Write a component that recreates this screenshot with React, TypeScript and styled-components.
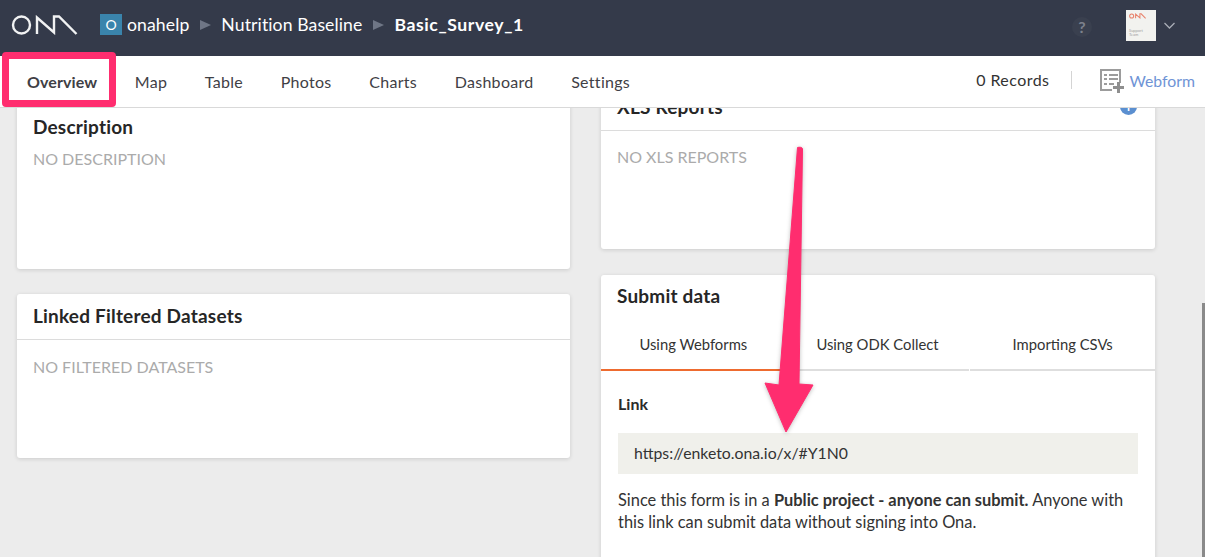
import React from "react";
import styled, { createGlobalStyle } from "styled-components";

const GlobalStyle = createGlobalStyle`
  html, body {
    margin: 0;
    height: 100%;
    overflow: hidden;
    background: #ececec;
    font-family: "Lato", "Liberation Sans", sans-serif;
    color: #2b2b2b;
  }
  * { box-sizing: border-box; }
`;

const Page = styled.div`
  position: relative;
  width: 1205px;
  height: 557px;
  overflow: hidden;
  display: flex;
  flex-direction: column;
`;

const TopBar = styled.header`
  height: 56px;
  flex: none;
  background: #343a4a;
  display: flex;
  align-items: center;
  padding: 0 30px 6px 11px;
  color: #fff;
`;

const Crumbs = styled.div`
  display: flex;
  align-items: center;
  margin-left: 22px;
  margin-bottom: 2px;
  font-size: 17.6px;
`;

const OrgBadge = styled.span`
  width: 22px;
  height: 21px;
  background: #3a84ac;
  font-size: 14px;
  display: flex;
  align-items: center;
  justify-content: center;
  margin-right: 5px;
`;

const Crumb = styled.span<{ $current?: boolean }>`
  font-weight: ${(p) => (p.$current ? 700 : 400)};
  letter-spacing: ${(p) => (p.$current ? "0.6px" : "0.1px")};
`;

const CrumbArrow = styled.span`
  width: 0;
  height: 0;
  margin: 1px 10px 0 11px;
  border-left: 11px solid #6f7686;
  border-top: 5.5px solid transparent;
  border-bottom: 5.5px solid transparent;
`;

const TopRight = styled.div`
  margin-left: auto;
  display: flex;
  align-items: center;
`;

const HelpButton = styled.span`
  width: 20px;
  height: 20px;
  border-radius: 50%;
  background: #3a404f;
  color: #7d828d;
  font-size: 16px;
  font-weight: 700;
  display: flex;
  align-items: center;
  justify-content: center;
  margin-right: 34px;
  margin-top: 3px;
`;

const Avatar = styled.div`
  width: 30px;
  height: 31px;
  margin-top: 1px;
  background: #f2f2ef;
  padding: 3px 3px;
  display: flex;
  flex-direction: column;
  justify-content: space-between;
`;

const AvatarText = styled.span`
  font-size: 4px;
  line-height: 4px;
  color: #a2a2a2;
  margin-bottom: 1px;
`;

const Caret = styled.svg`
  width: 11px;
  height: 7px;
  margin-left: 8px;
  fill: none;
  stroke: #a9adb6;
  stroke-width: 1.3;
`;

const NavBar = styled.nav`
  position: relative;
  z-index: 2;
  height: 52px;
  flex: none;
  background: #fff;
  border-bottom: 1px solid #d9d9d9;
  display: flex;
  align-items: center;
  padding: 0 10px 0 27px;
`;

const NavItem = styled.a<{ $active?: boolean }>`
  font-size: 16px;
  font-weight: ${(p) => (p.$active ? 700 : 400)};
  color: #3f4045;
  margin-right: 37.6px;
  margin-top: -1px;
  letter-spacing: ${(p) => (p.$active ? "0.1px" : "0.3px")};
`;

const ActiveMark = styled.span`
  position: absolute;
  left: 24px;
  bottom: 0;
  width: 73px;
  height: 3px;
  background: #f26b30;
`;

const NavRight = styled.div`
  margin-left: auto;
  margin-bottom: 3px;
  display: flex;
  align-items: center;
`;

const Records = styled.span`
  font-size: 16px;
  color: #333;
  letter-spacing: 0.45px;
  padding-right: 22px;
  margin-right: 27px;
  border-right: 1px solid #d4d4d4;
  line-height: 18px;
`;

const WebformLink = styled.a`
  font-size: 15.8px;
  color: #6f94d6;
  margin-left: 4px;
`;

const Scroller = styled.main`
  flex: 1;
  min-height: 0;
  overflow: hidden;
`;

// page is scrolled a little: the first row of cards slides under the nav
const Columns = styled.div`
  margin-top: -23px;
  padding-left: 17px;
  display: grid;
  grid-template-columns: 553px 554px;
  column-gap: 31px;
  align-items: start;
`;

const Column = styled.div<{ $gap: number }>`
  display: flex;
  flex-direction: column;
  gap: ${(p) => p.$gap}px;
`;

const Card = styled.section<{ $height?: number }>`
  background: #fff;
  border-radius: 3px;
  box-shadow: 0 1px 4px rgba(0, 0, 0, 0.14);
  height: ${(p) => (p.$height ? `${p.$height}px` : "auto")};
`;

const CardHeader = styled.div`
  height: 46px;
  padding: 0 18px 2px 16px;
  border-bottom: 1px solid #dcdcdc;
  display: flex;
  align-items: center;
  justify-content: space-between;
`;

const CardTitle = styled.h3`
  margin: 0;
  font-size: 19px;
  font-weight: 700;
  color: #262626;
  letter-spacing: 0.2px;
`;

const PlainHead = styled.div`
  padding: 30px 16px 0;
`;

const Empty = styled.p<{ $top?: number }>`
  margin: 0;
  padding: ${(p) => p.$top ?? 16}px 16px 0;
  font-size: 16px;
  color: #ababab;
  text-transform: uppercase;
`;

const InfoDot = styled.span`
  width: 17px;
  height: 17px;
  border-radius: 50%;
  background: #5b8fd0;
  color: #fff;
  font-size: 12px;
  font-weight: 700;
  display: flex;
  align-items: center;
  justify-content: center;
`;

const SubmitHead = styled.div`
  height: 49px;
  padding: 9px 16px 0;
`;

const Tabs = styled.div`
  display: grid;
  grid-template-columns: repeat(3, 1fr);
  height: 47px;
`;

const Tab = styled.div<{ $active?: boolean }>`
  display: flex;
  align-items: center;
  justify-content: center;
  padding-bottom: 6px;
  font-size: 14.8px;
  color: #333;
  border-bottom: 2px solid ${(p) => (p.$active ? "#ee6b2f" : "#dedede")};

  &:nth-child(2) {
    margin-right: 1px;
  }
`;

const SubmitBody = styled.div`
  padding: 23px 17px 40px 17px;
`;

const FieldLabel = styled.div`
  font-size: 16px;
  font-weight: 700;
  color: #2b2b2b;
  line-height: 20px;
`;

const LinkBox = styled.div`
  margin-top: 19px;
  height: 41px;
  background: #f0f0eb;
  padding: 0 16px 3px;
  display: flex;
  align-items: center;
  font-size: 15.8px;
  color: #333;
`;

const Help = styled.p`
  margin: 15px 0 0;
  font-size: 16.4px;
  line-height: 22px;
  color: #333;
`;

const Highlight = styled.div`
  position: absolute;
  z-index: 3;
  left: 2px;
  top: 52px;
  width: 114px;
  height: 55px;
  border: 7px solid #ff2d6f;
  border-radius: 4px;
`;

const ArrowOverlay = styled.svg`
  position: absolute;
  z-index: 4;
  left: 755px;
  top: 140px;
  width: 70px;
  height: 300px;
  filter: drop-shadow(0 1px 2px rgba(0, 0, 0, 0.25));
`;

const ScrollThumb = styled.div`
  position: absolute;
  right: 0;
  top: 303px;
  bottom: 0;
  width: 3px;
  background: #8a8a8a;
`;

function OnaLogo() {
  return (
    <svg width="67" height="20" viewBox="0 0 67 20" fill="none" stroke="#f1f2f3" strokeWidth="2.4">
      <circle cx="10.5" cy="10" r="8.5" />
      <path d="M26 19V2.5L43 17.5V1.500H48L65.500 19" />
    </svg>
  );
}

function WebformIcon() {
  return (
    <svg width="26" height="25" viewBox="0 0 26 25">
      <path d="M1 1h21v14h-2V3H3v18h10v2H1z" fill="#9c9c9c" />
      <path d="M5 6h3v2H5zM10 6h9v2h-9zM5 10h3v2H5zM10 10h9v2h-9zM5 15h3v2H5zM10 15h5v2h-5z" fill="#9c9c9c" />
      <path d="M18 14h3v4h4v3h-4v4h-3v-4h-4v-3h4z" fill="#8f8f8f" />
    </svg>
  );
}

export default function App() {
  return (
    <Page>
      <GlobalStyle />
      <TopBar>
        <OnaLogo />
        <Crumbs>
          <OrgBadge>O</OrgBadge>
          <Crumb>onahelp</Crumb>
          <CrumbArrow />
          <Crumb>Nutrition Baseline</Crumb>
          <CrumbArrow />
          <Crumb $current>Basic_Survey_1</Crumb>
        </Crumbs>
        <TopRight>
          <HelpButton>?</HelpButton>
          <Avatar>
            <svg width="17" height="6" viewBox="0 0 67 20" fill="none" stroke="#e8806a" strokeWidth="4">
              <circle cx="10.500" cy="10" r="8" />
              <path d="M26 19V2.500L43 17.500V1.500H48L65.500 19" />
            </svg>
            <AvatarText>
              Support
              <br />
              Team
            </AvatarText>
          </Avatar>
          <Caret viewBox="0 0 11 7">
            <path d="M.5 1l5 5 5-5" />
          </Caret>
        </TopRight>
      </TopBar>

      <NavBar>
        <NavItem $active>Overview</NavItem>
        <NavItem>Map</NavItem>
        <NavItem>Table</NavItem>
        <NavItem>Photos</NavItem>
        <NavItem>Charts</NavItem>
        <NavItem>Dashboard</NavItem>
        <NavItem>Settings</NavItem>
        <ActiveMark />
        <NavRight>
          <Records>0 Records</Records>
          <WebformIcon />
          <WebformLink>Webform</WebformLink>
        </NavRight>
      </NavBar>

      <Scroller>
        <Columns>
          <Column $gap={25}>
            <Card $height={184}>
              <PlainHead>
                <CardTitle>Description</CardTitle>
              </PlainHead>
              <Empty $top={11}>No description</Empty>
            </Card>
            <Card $height={164}>
              <CardHeader>
                <CardTitle>Linked Filtered Datasets</CardTitle>
              </CardHeader>
              <Empty $top={17}>No filtered datasets</Empty>
            </Card>
          </Column>
          <Column $gap={26}>
            <Card $height={164}>
              <CardHeader>
                <CardTitle>XLS Reports</CardTitle>
                <InfoDot>i</InfoDot>
              </CardHeader>
              <Empty>No XLS reports</Empty>
            </Card>
            <Card>
              <SubmitHead>
                <CardTitle>Submit data</CardTitle>
              </SubmitHead>
              <Tabs>
                <Tab $active>Using Webforms</Tab>
                <Tab>Using ODK Collect</Tab>
                <Tab>Importing CSVs</Tab>
              </Tabs>
              <SubmitBody>
                <FieldLabel>Link</FieldLabel>
                <LinkBox>https://enketo.ona.io/x/#Y1N0</LinkBox>
                <Help>
                  Since this form is in a <b>Public project - anyone can submit.</b> Anyone with this link can submit
                  data without signing into Ona.
                </Help>
              </SubmitBody>
            </Card>
          </Column>
        </Columns>
      </Scroller>

      <Highlight />
      <ArrowOverlay viewBox="0 0 70 300">
        <path
          d="M42.500 7.500C44 7 47.500 7 47.500 9L44 244L58 245L31 292L10 243L24 245Z"
          fill="#ff2d6f"
          stroke="#ff2d6f"
          strokeLinejoin="round"
        />
      </ArrowOverlay>
      <ScrollThumb />
    </Page>
  );
}
